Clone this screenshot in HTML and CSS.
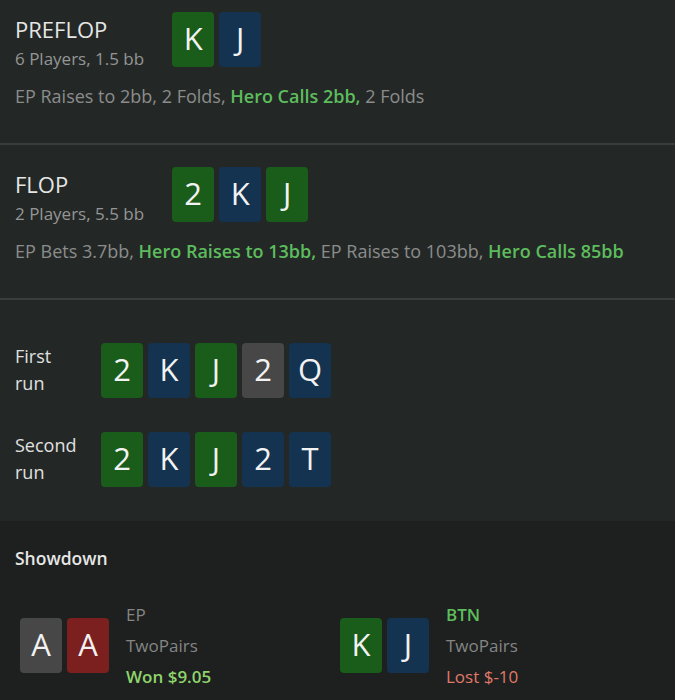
FILE: index.html
```html
<!DOCTYPE html>
<html lang="en">
<head>
<meta charset="utf-8">
<title>Hand history</title>
<link rel="stylesheet" href="styles.css">
</head>
<body>
<section class="street street-first">
  <div class="street-head">
    <div class="street-title">
      <div class="street-name">PREFLOP</div>
      <div class="street-meta">6 Players, 1.5 bb</div>
    </div>
    <div class="cards">
      <span class="card green">K</span><span class="card blue">J</span>
    </div>
  </div>
  <div class="actions">EP Raises to 2bb, 2 Folds, <b class="hero">Hero Calls 2bb,</b> 2 Folds</div>
</section>

<section class="street">
  <div class="street-head">
    <div class="street-title">
      <div class="street-name">FLOP</div>
      <div class="street-meta">2 Players, 5.5 bb</div>
    </div>
    <div class="cards">
      <span class="card green">2</span><span class="card blue">K</span><span class="card green">J</span>
    </div>
  </div>
  <div class="actions">EP Bets 3.7bb, <b class="hero">Hero Raises to 13bb,</b> EP Raises to 103bb, <b class="hero">Hero Calls 85bb</b></div>
</section>

<section class="runs">
  <div class="run">
    <div class="run-label">First run</div>
    <div class="cards">
      <span class="card green">2</span><span class="card blue">K</span><span class="card green">J</span><span class="card gray">2</span><span class="card blue">Q</span>
    </div>
  </div>
  <div class="run">
    <div class="run-label">Second run</div>
    <div class="cards">
      <span class="card green">2</span><span class="card blue">K</span><span class="card green">J</span><span class="card blue">2</span><span class="card blue">T</span>
    </div>
  </div>
</section>

<section class="showdown">
  <div class="showdown-title">Showdown</div>
  <div class="hands">
    <div class="hand">
      <div class="cards">
        <span class="card gray">A</span><span class="card red">A</span>
      </div>
      <div class="hand-info">
        <div class="pos">EP</div>
        <div class="combo">TwoPairs</div>
        <div class="won">Won $9.05</div>
      </div>
    </div>
    <div class="hand">
      <div class="cards">
        <span class="card green">K</span><span class="card blue">J</span>
      </div>
      <div class="hand-info">
        <div class="pos hero-pos">BTN</div>
        <div class="combo">TwoPairs</div>
        <div class="lost">Lost $-10</div>
      </div>
    </div>
  </div>
</section>
</body>
</html>
```

FILE: styles.css
```css
html, body {
  margin: 0;
  padding: 0;
}
body {
  background: #232826;
  font-family: "Open Sans", "Noto Sans", sans-serif;
  color: #8f8f8f;
  width: 675px;
  height: 700px;
  overflow: hidden;
}

.street {
  padding: 22px 15px 36px;
  border-bottom: 2px solid #393e3b;
}
.street-first {
  padding-top: 12px;
}
.street-head {
  display: flex;
  align-items: flex-start;
  gap: 28px;
}
.street-name {
  margin-top: 3px;
  font-size: 22px;
  line-height: 28px;
  color: #e6e6e6;
}
.street-meta {
  margin-top: 5px;
  font-size: 17px;
  line-height: 22px;
  color: #959595;
}
.actions {
  margin-top: 15px;
  font-size: 18px;
  line-height: 22px;
  color: #8c8c8c;
}
.hero {
  font-weight: 600;
  color: #5dbd5d;
}

.cards {
  display: flex;
  gap: 5px;
}
.card {
  width: 42px;
  height: 55px;
  box-sizing: border-box;
  border-radius: 4px;
  display: flex;
  align-items: center;
  justify-content: center;
  padding-bottom: 4px;
  font-size: 31px;
  color: #f2f2f2;
}
.green { background: #1a5c1a; }
.blue { background: #143350; }
.gray { background: #474747; }
.red { background: #7b1f1f; }

.runs {
  padding: 43px 15px 34px;
  display: flex;
  flex-direction: column;
  gap: 34px;
}
.run {
  display: flex;
  align-items: flex-start;
}
.run-label {
  width: 64px;
  margin-right: 22px;
  font-size: 18px;
  line-height: 27px;
  color: #e0e0e0;
}

.showdown {
  background: #1d201e;
  padding: 26px 15px 20px;
}
.showdown-title {
  font-size: 17.5px;
  font-weight: 600;
  line-height: 22px;
  color: #e6e6e6;
}
.hands {
  margin-top: 30px;
  margin-left: 5px;
  display: grid;
  grid-template-columns: 320px 320px;
}
.hand {
  display: flex;
  align-items: center;
}
.hand-info {
  margin-left: 17px;
  font-size: 17px;
  line-height: 31px;
  color: #858585;
}
.hero-pos {
  color: #5dbd5d;
  font-weight: 600;
}
.won {
  color: #8fd46c;
  font-weight: 600;
}
.lost {
  color: #e0796b;
  font-weight: 500;
}
```
